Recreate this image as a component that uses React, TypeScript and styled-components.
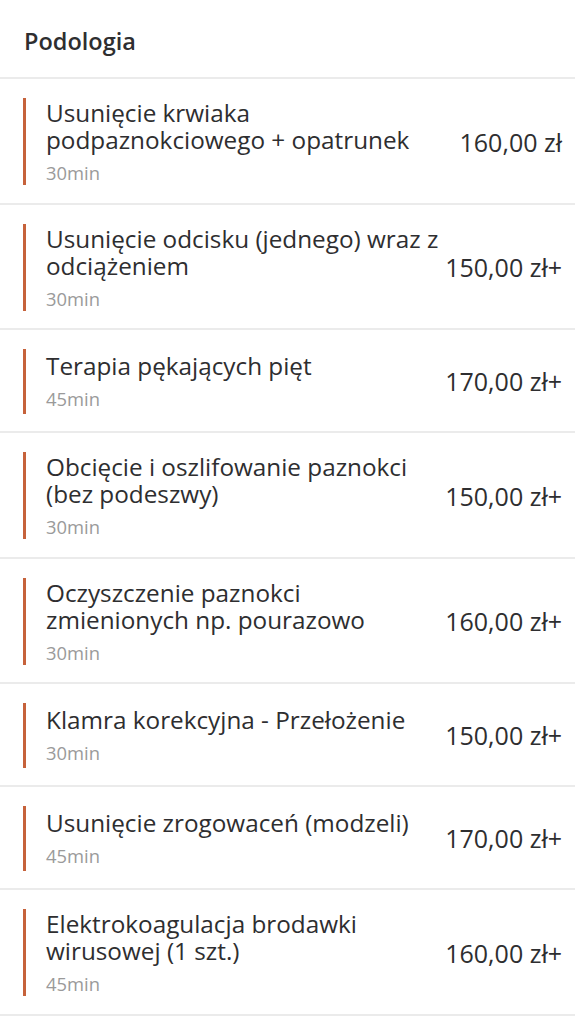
import React from "react";
import styled, { createGlobalStyle } from "styled-components";

const Global = createGlobalStyle`
  html, body { margin: 0; padding: 0; background: #ffffff; }
  body { font-family: "Open Sans", "Liberation Sans", sans-serif; -webkit-font-smoothing: antialiased; }
  * { box-sizing: border-box; }
`;

const Page = styled.div`
  width: 575px;
  background: #ffffff;
  color: #2e2e30;
`;

const Header = styled.h1`
  margin: 0;
  height: 79px;
  padding: 4px 24px 0;
  display: flex;
  align-items: center;
  font-size: 23.5px;
  font-weight: 600;
  color: #2e2e30;
  border-bottom: 2px solid #ebebeb;
`;

const List = styled.ul`
  list-style: none;
  margin: 0;
  padding: 0;
`;

const Row = styled.li`
  display: flex;
  align-items: center;
  gap: 8px;
  padding: 19px 13px 17.5px 23px;
  border-bottom: 2px solid #ebebeb;
`;

const Info = styled.div`
  flex: 1;
  min-width: 0;
  min-height: 64.5px;
  display: flex;
  flex-direction: column;
  justify-content: center;
  padding: 1px 0 1px 20px;
  border-left: 3px solid #c6623b;
`;

const Title = styled.div`
  font-size: 24.3px;
  line-height: 27px;
  color: #2e2e30;
  white-space: nowrap;
`;

const Duration = styled.div`
  margin-top: 9px;
  font-size: 18.4px;
  line-height: 22px;
  color: #9a9a9a;
`;

const Price = styled.div`
  flex: none;
  font-size: 25px;
  line-height: 28px;
  color: #2e2e30;
  white-space: nowrap;
`;

type Service = { title: string[]; duration: string; price: string };

const services: Service[] = [
  { title: ["Usunięcie krwiaka", "podpaznokciowego + opatrunek"], duration: "30min", price: "160,00 zł" },
  { title: ["Usunięcie odcisku (jednego) wraz z", "odciążeniem"], duration: "30min", price: "150,00 zł+" },
  { title: ["Terapia pękających pięt"], duration: "45min", price: "170,00 zł+" },
  { title: ["Obcięcie i oszlifowanie paznokci", "(bez podeszwy)"], duration: "30min", price: "150,00 zł+" },
  { title: ["Oczyszczenie paznokci", "zmienionych np. pourazowo"], duration: "30min", price: "160,00 zł+" },
  { title: ["Klamra korekcyjna - Przełożenie"], duration: "30min", price: "150,00 zł+" },
  { title: ["Usunięcie zrogowaceń (modzeli)"], duration: "45min", price: "170,00 zł+" },
  { title: ["Elektrokoagulacja brodawki", "wirusowej (1 szt.)"], duration: "45min", price: "160,00 zł+" },
];

export default function App() {
  return (
    <Page>
      <Global />
      <Header>Podologia</Header>
      <List>
        {services.map((s, i) => (
          <Row key={i}>
            <Info>
              <Title>
                {s.title.map((t, j) => (
                  <React.Fragment key={j}>
                    {j > 0 && <br />}
                    {t}
                  </React.Fragment>
                ))}
              </Title>
              <Duration>{s.duration}</Duration>
            </Info>
            <Price>{s.price}</Price>
          </Row>
        ))}
      </List>
    </Page>
  );
}
